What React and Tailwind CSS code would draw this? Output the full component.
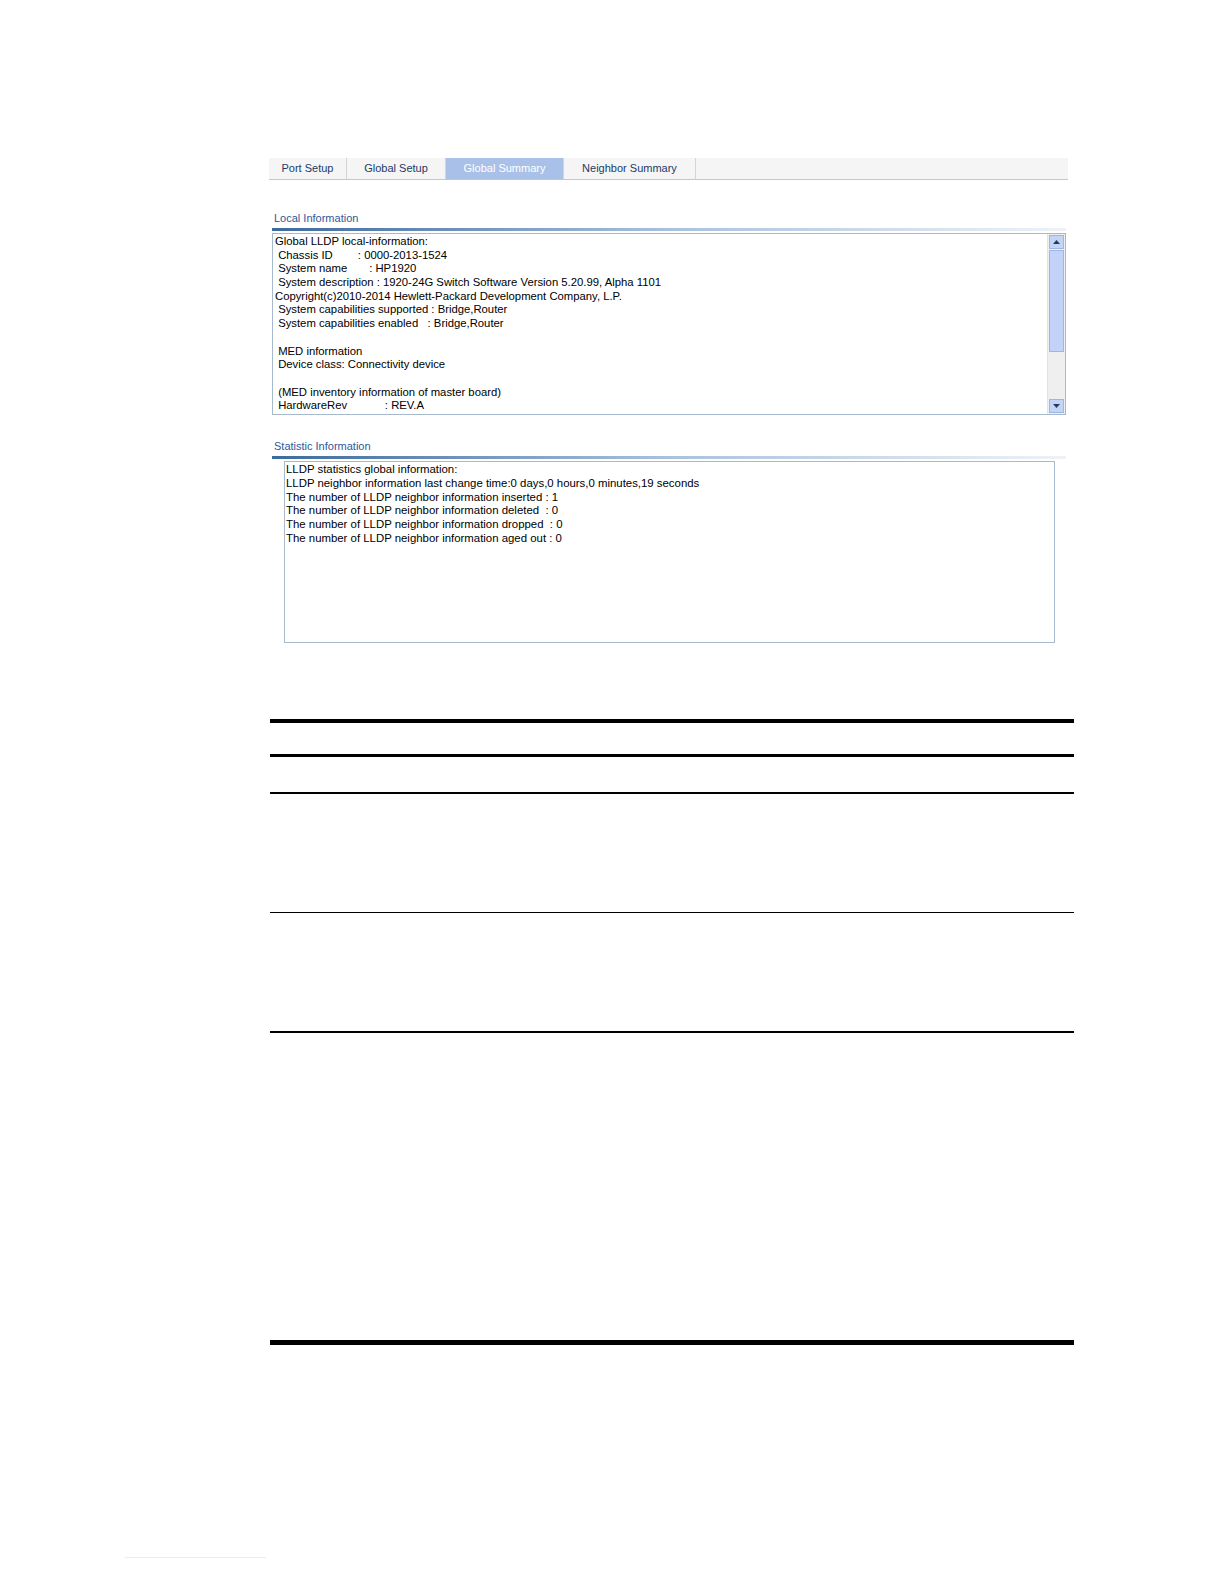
const tabs = [
  { label: "Port Setup", w: "w-[78px]" },
  { label: "Global Setup", w: "w-[99px]" },
  { label: "Global Summary", w: "w-[118px]", active: true },
  { label: "Neighbor Summary", w: "w-[132px]" },
];

const localLines = [
  "Global LLDP local-information:",
  " Chassis ID        : 0000-2013-1524",
  " System name       : HP1920",
  " System description : 1920-24G Switch Software Version 5.20.99, Alpha 1101",
  "Copyright(c)2010-2014 Hewlett-Packard Development Company, L.P.",
  " System capabilities supported : Bridge,Router",
  " System capabilities enabled   : Bridge,Router",
  "",
  " MED information",
  " Device class: Connectivity device",
  "",
  " (MED inventory information of master board)",
  " HardwareRev            : REV.A",
];

const statLines = [
  "LLDP statistics global information:",
  "LLDP neighbor information last change time:0 days,0 hours,0 minutes,19 seconds",
  "The number of LLDP neighbor information inserted : 1",
  "The number of LLDP neighbor information deleted  : 0",
  "The number of LLDP neighbor information dropped  : 0",
  "The number of LLDP neighbor information aged out : 0",
];

function SectionTitle({ children, className }) {
  return (
    <div className={className}>
      <div className="h-[14px] pl-[2px] text-[11px] leading-[14px] text-[#2a5a9c]">{children}</div>
      <div className="mt-[3px] h-[3px] w-[794px] bg-gradient-to-r from-[#3d6a9e] via-[#a9c1de] to-[#eef2f7]" />
    </div>
  );
}

function Scrollbar() {
  return (
    <div className="flex w-[18px] flex-col border-l border-[#e2e2e2] bg-[#efefef] p-[1px]">
      <div className="flex h-[14px] items-center justify-center border border-[#9fb6e2] bg-[#c4d4f6]">
        <svg width="7" height="4" viewBox="0 0 7 4"><path d="M0 4 L3.5 0 L7 4 Z" fill="#2a3a5a" /></svg>
      </div>
      <div className="mt-[1px] h-[102px] border border-[#9fb6e2] bg-[#c2d2f8]" />
      <div className="flex-1" />
      <div className="flex h-[14px] items-center justify-center border border-[#9fb6e2] bg-[#c4d4f6]">
        <svg width="7" height="4" viewBox="0 0 7 4"><path d="M0 0 L7 0 L3.5 4 Z" fill="#2a3a5a" /></svg>
      </div>
    </div>
  );
}

export default function App() {
  return (
    <div className="relative min-h-[1584px] w-[1224px] bg-white font-['Liberation_Sans',Arial,sans-serif]">
      <div className="ml-[269px] w-[805px] pt-[158px]">
        {/* tab bar */}
        <div className="flex h-[22px] w-[799px] border-b border-[#c6c6c6] bg-[#f5f5f5]">
          {tabs.map((t) => (
            <div
              key={t.label}
              className={`${t.w} flex items-center justify-center border-r border-[#d4d4d4] text-[11px] ${
                t.active ? "bg-[#a9c1e9] text-white" : "text-[#1e3a66]"
              }`}
            >
              {t.label}
            </div>
          ))}
        </div>

        <div className="ml-[3px]">
          <SectionTitle className="mt-[31px]">Local Information</SectionTitle>
          <div className="mt-[2px] flex h-[182px] w-[794px] border border-[#a7b9cc] bg-white">
            <div className="flex-1 overflow-hidden whitespace-pre pl-[2px] pt-[1px] text-[11.3px] leading-[13.7px] text-black">
              {localLines.map((l, i) => (
                <div key={i} className="h-[13.7px]">{l}</div>
              ))}
            </div>
            <Scrollbar />
          </div>

          <SectionTitle className="mt-[24px]">Statistic Information</SectionTitle>
          <div className="ml-[12px] mt-[2px] h-[182px] w-[771px] overflow-hidden whitespace-pre border border-[#a7b9cc] pl-[1px] pt-[1px] text-[11.4px] leading-[13.8px] text-black">
            {statLines.map((l, i) => (
              <div key={i} className="h-[13.8px]">{l}</div>
            ))}
          </div>
        </div>

        {/* table rules */}
        <div className="ml-[1px] w-[804px]">
          <div className="mt-[76px] h-[4px] bg-black" />
          <div className="mt-[31px] h-[3px] bg-black" />
          <div className="h-[35px]" />
          <div className="h-[1.5px] bg-black" />
          <div className="h-[118px]" />
          <div className="h-[1.5px] bg-black" />
          <div className="h-[118px]" />
          <div className="h-[1.5px] bg-black" />
          <div className="h-[307px]" />
          <div className="h-[5px] bg-black" />
        </div>
      </div>

      {/* footnote rule */}
      <div className="ml-[125px] mt-[212px] h-[1px] w-[141px] bg-[#f3ecd8]" />
    </div>
  );
}
